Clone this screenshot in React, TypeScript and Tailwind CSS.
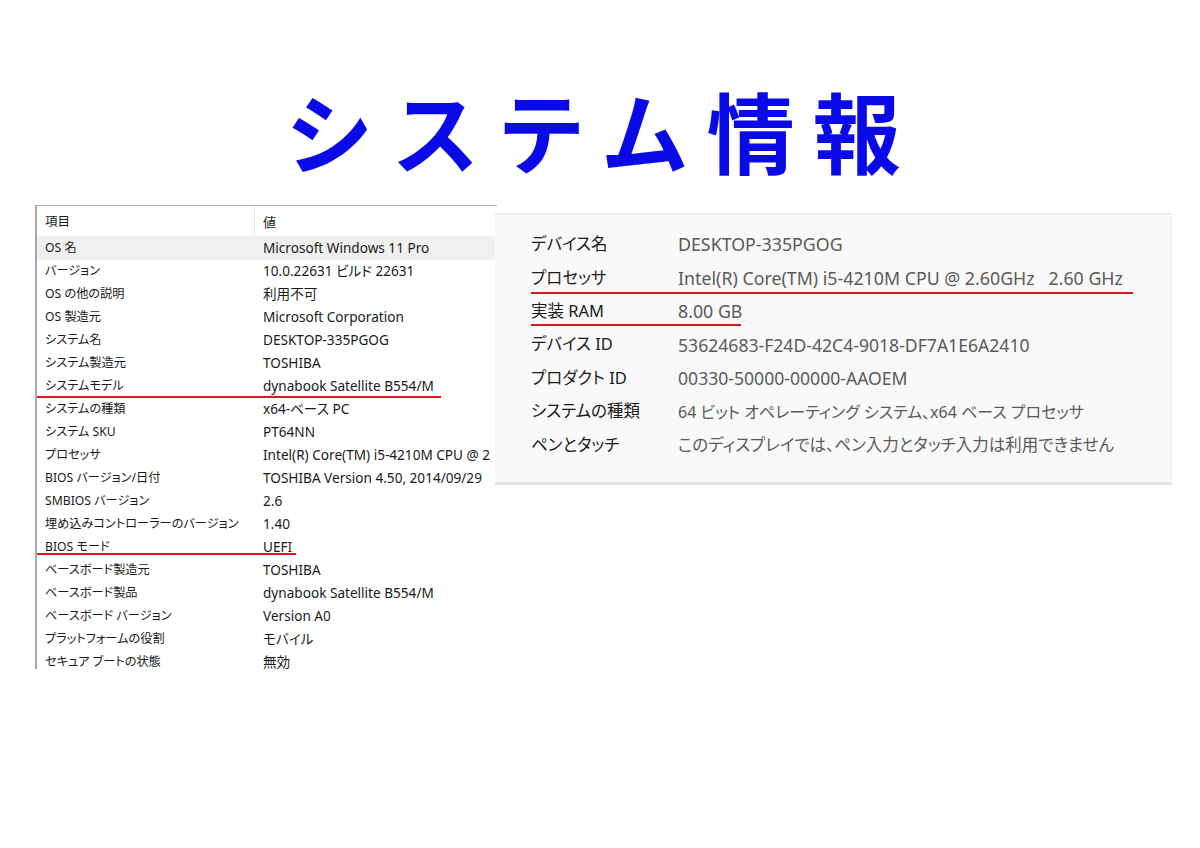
import React from "react";

const leftRows: [string, string][] = [
  ["OS 名", "Microsoft Windows 11 Pro"],
  ["バージョン", "10.0.22631 ビルド 22631"],
  ["OS の他の説明", "利用不可"],
  ["OS 製造元", "Microsoft Corporation"],
  ["システム名", "DESKTOP-335PGOG"],
  ["システム製造元", "TOSHIBA"],
  ["システムモデル", "dynabook Satellite B554/M"],
  ["システムの種類", "x64-ベース PC"],
  ["システム SKU", "PT64NN"],
  ["プロセッサ", "Intel(R) Core(TM) i5-4210M CPU @ 2"],
  ["BIOS バージョン/日付", "TOSHIBA Version 4.50, 2014/09/29"],
  ["SMBIOS バージョン", "2.6"],
  ["埋め込みコントローラーのバージョン", "1.40"],
  ["BIOS モード", "UEFI"],
  ["ベースボード製造元", "TOSHIBA"],
  ["ベースボード製品", "dynabook Satellite B554/M"],
  ["ベースボード バージョン", "Version A0"],
  ["プラットフォームの役割", "モバイル"],
  ["セキュア ブートの状態", "無効"],
];

const rightRows: { k: string; v: string; size: string }[] = [
  { k: "デバイス名", v: "DESKTOP-335PGOG", size: "text-[17.8px]" },
  { k: "プロセッサ", v: "Intel(R) Core(TM) i5-4210M CPU @ 2.60GHz   2.60 GHz", size: "text-[17.8px]" },
  { k: "実装 RAM", v: "8.00 GB", size: "text-[17.8px]" },
  { k: "デバイス ID", v: "53624683-F24D-42C4-9018-DF7A1E6A2410", size: "text-[17.6px]" },
  { k: "プロダクト ID", v: "00330-50000-00000-AAOEM", size: "text-[17.6px]" },
  { k: "システムの種類", v: "64 ビット オペレーティング システム、x64 ベース プロセッサ", size: "text-[16px]" },
  { k: "ペンとタッチ", v: "このディスプレイでは、ペン入力とタッチ入力は利用できません", size: "text-[16.5px]" },
];

export default function App() {
  return (
    <div className="w-[1200px] h-[848px] bg-white overflow-hidden font-['Noto_Sans','Noto_Sans_CJK_JP',sans-serif]">
      <h1 className="pt-[85px] pl-[4px] text-center text-[88px] leading-none font-bold text-[#0a0ae8] tracking-[18px] font-['Noto_Sans_CJK_JP',sans-serif]">
        システム情報
      </h1>
      <div className="mt-[32px] flex items-start pl-[35px]">
        {/* msinfo32 list */}
        <div className="w-[462px] h-[464px] overflow-hidden border-l-2 border-t border-l-[#a8a8a8] border-t-[#b4b4b4] bg-white text-[#1a1a1a] [font-feature-settings:'palt']">
          <div className="flex h-[31px] items-center border-b border-[#f0f0f0]">
            <div className="w-[218px] shrink-0 h-full flex items-center pt-[3px] pl-[8px] border-r border-[#e8e8e8] text-[12.5px]">項目</div>
            <div className="pl-[8px] pt-[3px] text-[13px]">値</div>
          </div>
          {leftRows.map(([k, v], i) => (
            <div
              key={i}
              className={`relative flex h-[23px] items-center whitespace-nowrap ${i === 0 ? "bg-[#f0f0f0]" : ""}`}
            >
              <div className="w-[218px] shrink-0 pl-[8px] text-[12.2px]">{k}</div>
              <div className="pl-[8px] text-[13.6px]">{v}</div>
              {i === 6 && <span className="absolute left-0 top-[21px] h-[2px] w-[404px] bg-[#e0141e]" />}
              {i === 13 && <span className="absolute left-0 top-[17px] h-[2px] w-[259px] bg-[#e0141e]" />}
            </div>
          ))}
        </div>
        {/* settings card */}
        <div className="relative z-10 -ml-[2px] mt-[8px] w-[677px] h-[272px] bg-[#f9f9f9] border-t-2 border-b-[3px] border-r border-t-[#ececec] border-b-[#e6e6e6] border-r-[#f0f0f0] pt-[13px] pl-[36px] [font-feature-settings:'palt']">
          {rightRows.map(({ k, v, size }, i) => (
            <div key={i} className="relative flex h-[33.4px] items-center whitespace-nowrap">
              <div className="w-[147px] shrink-0 text-[16.5px] text-[#1b1b1b]">{k}</div>
              <div className={`text-[#5a5a5a] whitespace-pre ${size}`}>{v}</div>
              {i === 1 && <span className="absolute left-0 top-[31px] h-[2px] w-[602px] bg-[#e0141e]" />}
              {i === 2 && <span className="absolute left-0 top-[29px] h-[2px] w-[210px] bg-[#e0141e]" />}
            </div>
          ))}
        </div>
      </div>
    </div>
  );
}
